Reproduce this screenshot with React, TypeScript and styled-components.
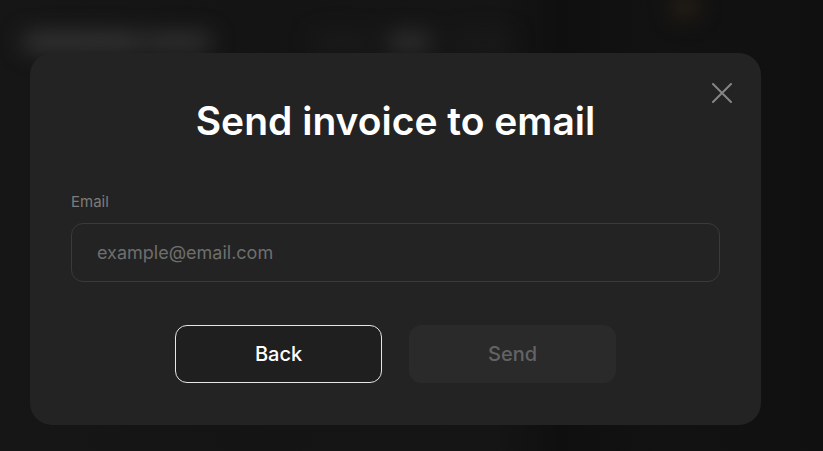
import React from "react";
import styled, { createGlobalStyle } from "styled-components";

const Global = createGlobalStyle`
  html, body { margin: 0; padding: 0; background: #131313; }
  body { width: 823px; height: 451px; overflow: hidden; font-family: Inter, "Noto Sans", sans-serif; }
  * { box-sizing: border-box; }
`;

const Screen = styled.div`
  position: relative;
  width: 823px;
  height: 451px;
  overflow: hidden;
  background: linear-gradient(90deg, #161616 0%, #141414 30%, #151515 60%, #0f0f0f 68%, #121212 80%, #101010 100%);
`;

const BlurredPage = styled.div`
  display: flex;
  flex-direction: column;
  height: 100%;
  filter: blur(11px);
`;

const Header = styled.div`
  display: flex;
  align-items: flex-start;
  padding: 33px 20px 0 22px;
  height: 70px;
`;

const Blob = styled.div<{ $w: number; $c: string; $ml: number }>`
  width: ${(p) => p.$w}px;
  height: 18px;
  margin-left: ${(p) => p.$ml}px;
  border-radius: 9px;
  background: ${(p) => p.$c};
  flex-shrink: 0;
`;

const Glow = styled.div`
  width: 26px;
  height: 26px;
  border-radius: 50%;
  background: #2a2116;
  margin-top: -40px;
  margin-left: 160px;
`;

const Overlay = styled.div`
  position: absolute;
  inset: 0;
  display: flex;
  align-items: flex-start;
  padding: 53px 0 0 30px;
`;

const Modal = styled.div`
  position: relative;
  width: 731px;
  height: 372px;
  background: #232323;
  border-radius: 22px;
  padding: 45px 41px 42px;
  display: flex;
  flex-direction: column;
`;

const Title = styled.h2`
  margin: 0;
  font-size: 39px;
  line-height: 46px;
  font-weight: 600;
  color: #ffffff;
  text-align: center;
`;

const CloseButton = styled.button`
  position: absolute;
  top: 30px;
  right: 29px;
  width: 20px;
  height: 20px;
  padding: 0;
  border: none;
  background: transparent;
  display: flex;
  cursor: pointer;
`;

const Field = styled.label`
  display: flex;
  flex-direction: column;
  gap: 12px;
  margin-top: 49px;
`;

const LabelText = styled.span`
  font-size: 15px;
  line-height: 18px;
  color: #7c7c7c;
`;

const Input = styled.input`
  height: 59px;
  border-radius: 12px;
  border: 1px solid #3a3a3a;
  background: transparent;
  padding: 0 25px;
  font-family: Inter, "Noto Sans", sans-serif;
  font-size: 18px;
  color: #ddd;
  outline: none;
  &::placeholder { color: #6e6e6e; }
`;

const Actions = styled.div`
  display: flex;
  justify-content: center;
  gap: 27px;
  margin-top: 43px;
`;

const Button = styled.button<{ $variant: "outline" | "disabled" }>`
  width: 207px;
  height: 58px;
  border-radius: 12px;
  font-family: Inter, "Noto Sans", sans-serif;
  font-size: 20px;
  font-weight: 500;
  cursor: pointer;
  border: 1px solid ${(p) => (p.$variant === "outline" ? "#e6e6e6" : "#2a2a2a")};
  background: ${(p) => (p.$variant === "outline" ? "#1f1f1f" : "#2a2a2a")};
  color: ${(p) => (p.$variant === "outline" ? "#ffffff" : "#636363")};
`;

export default function App() {
  return (
    <Screen>
      <Global />
      <BlurredPage>
        <Header>
          <Blob $w={120} $c="#383838" $ml={0} />
          <Blob $w={70} $c="#343434" $ml={0} />
          <Blob $w={60} $c="#1b1b1b" $ml={100} />
          <Blob $w={45} $c="#323232" $ml={15} />
          <Blob $w={60} $c="#1a1a1a" $ml={20} />
          <Glow />
        </Header>
      </BlurredPage>
      <Overlay>
        <Modal>
          <CloseButton aria-label="Close">
            <svg width="20" height="20" viewBox="0 0 20 20" fill="none">
              <path d="M1 1L19 19M19 1L1 19" stroke="#858585" strokeWidth="2" strokeLinecap="round" />
            </svg>
          </CloseButton>
          <Title>Send invoice to email</Title>
          <Field>
            <LabelText>Email</LabelText>
            <Input placeholder="example@email.com" />
          </Field>
          <Actions>
            <Button $variant="outline">Back</Button>
            <Button $variant="disabled" disabled>Send</Button>
          </Actions>
        </Modal>
      </Overlay>
    </Screen>
  );
}
